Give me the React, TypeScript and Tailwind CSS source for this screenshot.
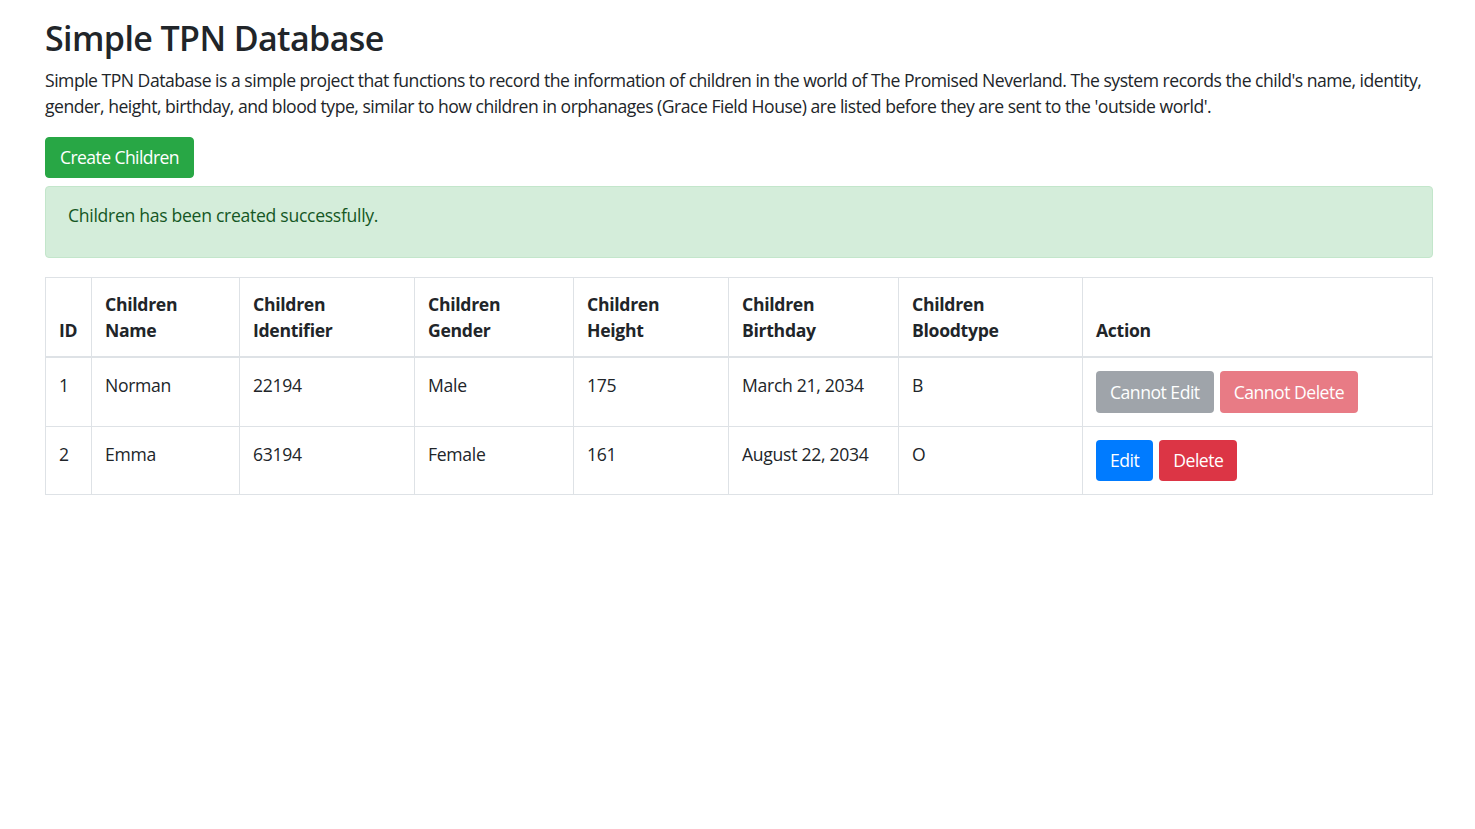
const children = [
  { id: 1, name: 'Norman', identifier: '22194', gender: 'Male', height: '175', birthday: 'March 21, 2034', blood: 'B', locked: true },
  { id: 2, name: 'Emma', identifier: '63194', gender: 'Female', height: '161', birthday: 'August 22, 2034', blood: 'O', locked: false },
];

const headers = [
  { label: 'ID', w: 'w-[46px]' },
  { label: 'Children Name', w: 'w-[148px]' },
  { label: 'Children Identifier', w: 'w-[175px]' },
  { label: 'Children Gender', w: 'w-[159px]' },
  { label: 'Children Height', w: 'w-[155px]' },
  { label: 'Children Birthday', w: 'w-[170px]' },
  { label: 'Children Bloodtype', w: 'w-[184px]' },
  { label: 'Action', w: '' },
];

const cell = 'align-top border border-[#dee2e6] px-[13px] pt-[14px] pb-[13px]';

const App = () => {
  return (
    <div className="min-h-screen bg-white pl-[45px] pr-[42px] pt-[17px] text-[#212529] font-['Segoe_UI','Open_Sans',sans-serif] text-[17.6px] leading-[26.4px] tracking-[-0.3px]">
      <h1 className="text-[34px] leading-[42px] font-semibold tracking-[-0.6px] mb-[8px]">Simple TPN Database</h1>
      <p className="mb-[17px] tracking-[-0.5px]">
        Simple TPN Database is a simple project that functions to record the information of children in the world of The Promised Neverland. The system records the child's name, identity, gender, height, birthday, and blood type, similar to how children in orphanages (Grace Field House) are listed before they are sent to the 'outside world'.
      </p>
      <button className="bg-[#28a745] text-white rounded-[4px] px-[14px] py-[6.5px] border border-[#28a745] leading-[26.4px] tracking-[-0.6px]">
        Create Children
      </button>
      <div className="mt-[8px] mb-[19px] bg-[#d4edda] border border-[#c3e6cb] text-[#155724] rounded-[4px] px-[22px] pt-[15px] pb-[28px]">
        <p>Children has been created successfully.</p>
      </div>
      <table className="w-full border-collapse border border-[#dee2e6] table-fixed">
        <thead>
          <tr>
            {headers.map((h) => (
              <th key={h.label} className={`${h.w} text-left align-bottom font-bold border border-[#dee2e6] border-b-2 px-[13px] py-[13px]`}>
                {h.label}
              </th>
            ))}
          </tr>
        </thead>
        <tbody>
          {children.map((c) => (
            <tr key={c.id}>
              <td className={cell}>{c.id}</td>
              <td className={cell}>{c.name}</td>
              <td className={cell}>{c.identifier}</td>
              <td className={cell}>{c.gender}</td>
              <td className={cell}>{c.height}</td>
              <td className={cell}>{c.birthday}</td>
              <td className={cell}>{c.blood}</td>
              <td className="align-top border border-[#dee2e6] px-[13px] py-[13px]">
                {c.locked ? (
                  <div className="flex gap-[6px]">
                    <button className="bg-[#6c757d] opacity-65 text-white rounded-[4px] px-[13px] py-[6.5px] border border-transparent leading-[26.4px] tracking-[-0.5px]">Cannot Edit</button>
                    <button className="bg-[#dc3545] opacity-65 text-white rounded-[4px] px-[13px] py-[6.5px] border border-transparent leading-[26.4px] tracking-[-0.5px]">Cannot Delete</button>
                  </div>
                ) : (
                  <div className="flex gap-[6px]">
                    <button className="bg-[#007bff] text-white rounded-[4px] px-[13px] py-[6.5px] border border-transparent leading-[26.4px] tracking-[-0.5px]">Edit</button>
                    <button className="bg-[#dc3545] text-white rounded-[4px] px-[13px] py-[6.5px] border border-transparent leading-[26.4px] tracking-[-0.5px]">Delete</button>
                  </div>
                )}
              </td>
            </tr>
          ))}
        </tbody>
      </table>
    </div>
  );
};

export default App;
